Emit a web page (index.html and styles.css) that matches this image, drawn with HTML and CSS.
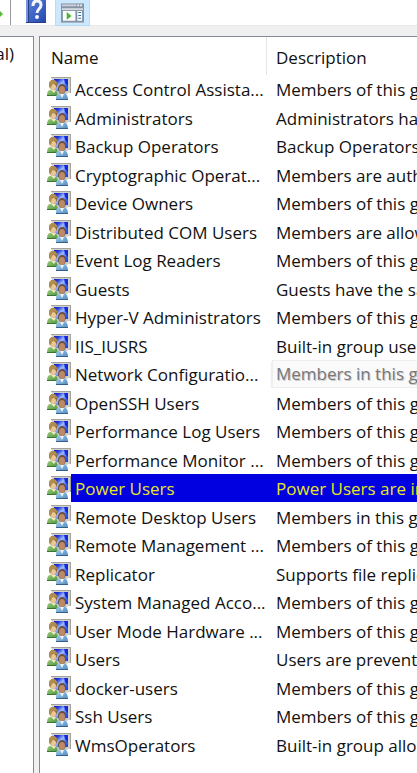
FILE: index.html
```
<!DOCTYPE html>
<html lang="en">
<head>
<meta charset="utf-8">
<meta name="viewport" content="width=device-width, initial-scale=1">
<title>Local Users and Groups</title>
<link rel="stylesheet" href="styles.css">
</head>
<body>
<svg class="defs" aria-hidden="true">
  <defs>
    <linearGradient id="screen" x1="0" y1="0" x2="1" y2="1"><stop offset="0" stop-color="#1420b8"/><stop offset=".2" stop-color="#2038e0"/><stop offset=".45" stop-color="#a0bcff"/><stop offset=".7" stop-color="#3c66f4"/><stop offset="1" stop-color="#1a38e0"/></linearGradient>
    <linearGradient id="green" x1="0" y1="0" x2="1" y2="1"><stop offset="0" stop-color="#9cc878"/><stop offset="1" stop-color="#4a9440"/></linearGradient>
    <linearGradient id="blue" x1="0" y1="0" x2="1" y2="1"><stop offset="0" stop-color="#a8d0f0"/><stop offset="1" stop-color="#5088bc"/></linearGradient>
    <linearGradient id="book" x1="0" y1="0" x2="1" y2="1"><stop offset="0" stop-color="#5c82de"/><stop offset="1" stop-color="#2446ac"/></linearGradient>
    <symbol id="group" viewBox="0 0 24 24">
      <path d="M4 0h20v16h-3l-1 1h-9z" fill="#d0cfca"/>
      <path d="M4 0h20v1H4zM23 1h1v15h-1z" fill="#a3a29c"/>
      <path d="M7 2h14v12H7z" fill="url(#screen)"/>
      <path d="M17 2h4v7l-3-3z" fill="#1428dc"/>
      <path d="M0 19q0-6 3-6h5q3 1 3 6z" fill="url(#green)"/>
      <path d="M0 18h10v1H0z" fill="#397430"/>
      <ellipse cx="6" cy="8" rx="4" ry="5" fill="#8f6c38"/>
      <ellipse cx="6" cy="10" rx="3" ry="3" fill="#ecc796"/>
      <path d="M2 8q0-5 4-5 4 0 4 4-4-1-5 1l-1 3q-2-1-2-3z" fill="#b08e50"/>
      <path d="M4 13h5l-2 3z" fill="#eee9bd"/>
      <path d="M9 23q-1-6 4-7h4q4 1 4 7z" fill="url(#blue)"/>
      <path d="M9 22h12v1H9z" fill="#32618f"/>
      <ellipse cx="15" cy="12" rx="4" ry="5" fill="#6b5042"/>
      <ellipse cx="15" cy="13" rx="3" ry="4" fill="#bc8b65"/>
      <path d="M13 17h4l-2 4z" fill="#edf5fc"/>
    </symbol>
  </defs>
</svg>
<header class="toolbar">
  <button class="tool tool-next" aria-label="Export list"><svg viewBox="0 0 4 12" width="4" height="12"><path d="M0 3l3 3-3 3z" fill="#57bd38"/></svg></button>
  <button class="tool tool-help" aria-label="Help"><svg viewBox="0 0 20 24" width="20" height="24"><path d="M0 0h20v23H0z" fill="url(#book)"/><path d="M0 0h2v23H0z" fill="#7895de"/><path d="M2 0h1v22H2zM0 22h20v1H0z" fill="#263d86"/><path d="M7 6q0-5 4-5t4 4q0 2-2 4-2 2-2 4" fill="none" stroke="#f5f5fa" stroke-width="3"/><circle cx="11" cy="17" r="2" fill="#f5f5fa"/></svg></button>
  <button class="tool tool-pane" aria-label="Show action pane" aria-pressed="true"><svg viewBox="0 0 24 20" width="24" height="20"><path d="M0 0h24v20H0z" fill="#8793a4"/><path d="M1 1h15v2H1z" fill="#c7d0dc"/><path d="M17 1h2v2h-2zM20 1h2v2h-2z" fill="#eef2f8"/><path d="M1 5h22v2H1z" fill="#d5dae2"/><path d="M2 8h13v10H2zM17 8h5v10h-5z" fill="#fafcfd"/><path d="M6 9l5 4-5 4z" fill="#49b52c"/><path d="M18 9h3v1h-3zM18 12h3v1h-3zM18 15h3v1h-3z" fill="#2874ae"/></svg></button>
</header>
<main class="workspace">
  <nav class="tree"><span class="tree-label">al)</span></nav>
  <section class="list">
    <table class="groups">
      <thead><tr><th class="name-head" scope="col">Name</th><th class="desc-head" scope="col">Description</th></tr></thead>
      <tbody>
        <tr><td class="name"><svg class="icon"><use href="#group"/></svg><span>Access Control Assista...</span></td><td class="desc">Members of this g</td></tr>
        <tr><td class="name"><svg class="icon"><use href="#group"/></svg><span>Administrators</span></td><td class="desc">Administrators hav</td></tr>
        <tr><td class="name"><svg class="icon"><use href="#group"/></svg><span>Backup Operators</span></td><td class="desc">Backup Operators</td></tr>
        <tr><td class="name"><svg class="icon"><use href="#group"/></svg><span>Cryptographic Operat...</span></td><td class="desc">Members are auth</td></tr>
        <tr><td class="name"><svg class="icon"><use href="#group"/></svg><span>Device Owners</span></td><td class="desc">Members of this g</td></tr>
        <tr><td class="name"><svg class="icon"><use href="#group"/></svg><span>Distributed COM Users</span></td><td class="desc">Members are allow</td></tr>
        <tr><td class="name"><svg class="icon"><use href="#group"/></svg><span>Event Log Readers</span></td><td class="desc">Members of this g</td></tr>
        <tr><td class="name"><svg class="icon"><use href="#group"/></svg><span>Guests</span></td><td class="desc">Guests have the sa</td></tr>
        <tr><td class="name"><svg class="icon"><use href="#group"/></svg><span>Hyper-V Administrators</span></td><td class="desc">Members of this g</td></tr>
        <tr><td class="name"><svg class="icon"><use href="#group"/></svg><span>IIS_IUSRS</span></td><td class="desc">Built-in group use</td></tr>
        <tr><td class="name"><svg class="icon"><use href="#group"/></svg><span>Network Configuratio...</span></td><td class="desc hinted"><span class="hint">Members in this g</span></td></tr>
        <tr><td class="name"><svg class="icon"><use href="#group"/></svg><span>OpenSSH Users</span></td><td class="desc">Members of this g</td></tr>
        <tr><td class="name"><svg class="icon"><use href="#group"/></svg><span>Performance Log Users</span></td><td class="desc">Members of this g</td></tr>
        <tr><td class="name"><svg class="icon"><use href="#group"/></svg><span>Performance Monitor ...</span></td><td class="desc">Members of this g</td></tr>
        <tr class="selected"><td class="name"><svg class="icon"><use href="#group"/></svg><span>Power Users</span></td><td class="desc">Power Users are in</td></tr>
        <tr><td class="name"><svg class="icon"><use href="#group"/></svg><span>Remote Desktop Users</span></td><td class="desc">Members in this g</td></tr>
        <tr><td class="name"><svg class="icon"><use href="#group"/></svg><span>Remote Management ...</span></td><td class="desc">Members of this g</td></tr>
        <tr><td class="name"><svg class="icon"><use href="#group"/></svg><span>Replicator</span></td><td class="desc">Supports file replic</td></tr>
        <tr><td class="name"><svg class="icon"><use href="#group"/></svg><span>System Managed Acco...</span></td><td class="desc">Members of this g</td></tr>
        <tr><td class="name"><svg class="icon"><use href="#group"/></svg><span>User Mode Hardware ...</span></td><td class="desc">Members of this g</td></tr>
        <tr><td class="name"><svg class="icon"><use href="#group"/></svg><span>Users</span></td><td class="desc">Users are prevente</td></tr>
        <tr><td class="name"><svg class="icon"><use href="#group"/></svg><span>docker-users</span></td><td class="desc">Members of this g</td></tr>
        <tr><td class="name"><svg class="icon"><use href="#group"/></svg><span>Ssh Users</span></td><td class="desc">Members of this g</td></tr>
        <tr><td class="name"><svg class="icon"><use href="#group"/></svg><span>WmsOperators</span></td><td class="desc">Built-in group allo</td></tr>
      </tbody>
    </table>
  </section>
</main>
</body>
</html>
```
FILE: styles.css
```
* { box-sizing: border-box; }
body {
  margin: 0;
  min-height: 100vh;
  display: flex;
  flex-direction: column;
  overflow: hidden;
  background: #f0f0f0;
  color: #111;
  font: 17px/28px "Open Sans", "Noto Sans", sans-serif;
}
.defs { position: absolute; width: 0; height: 0; }
.toolbar {
  display: flex;
  align-items: flex-start;
  height: 26px;
  background: #fff;
  border-bottom: 1px solid #e8e8e8;
}
.tool { display: flex; padding: 0; border: 0; background: none; }
.tool-next { width: 11px; height: 25px; padding-top: 8px; border-right: 1px solid #9a9a9a; }
.tool-help { margin-left: 15px; }
.tool-pane {
  width: 35px;
  height: 26px;
  margin-left: 9px;
  padding: 3px 5px;
  background: #cce8ff;
  border: 1px solid #b5ddfb;
  border-top: 0;
}
.workspace { flex: 1; display: flex; gap: 5px; padding-top: 10px; }
.tree, .list { background: #fff; border-style: solid; border-color: #848b96; border-width: 1px 0 0; }
.tree { width: 34px; border-right-width: 1px; }
.tree-label { display: flex; justify-content: flex-end; width: 14px; padding: 3px 0; }
.list { flex: 1; min-width: 0; border-left-width: 1px; padding-left: 7px; overflow: hidden; }
.groups { width: 100%; table-layout: fixed; border-collapse: separate; border-spacing: 0; }
th, td { padding: 0; text-align: left; font-weight: 400; white-space: nowrap; overflow: hidden; }
th { height: 38px; padding-top: 4px; }
.name-head { width: 220px; padding-left: 4px; border-right: 1px solid #e5e5e5; }
.desc-head, .desc { padding-left: 9px; }
td { height: 28px; line-height: 26px; }
tbody tr:nth-child(even) td { height: 29px; }
.name span, .desc { padding-top: 2px; }
.name span { display: inline-block; width: calc(100% - 24px); padding-left: 4px; vertical-align: top; }
.icon { width: 24px; height: 24px; margin-top: 2px; vertical-align: top; }
.selected .desc, .selected .name span { background: #0000e0; color: #e8e820; }
.desc.hinted { padding: 0 0 0 5px; }
.hint {
  display: block;
  padding-left: 3px;
  border: 1px solid #eee;
  border-right: 0;
  background: #fafafa;
  color: #777;
  text-shadow: 1px 1px 0 #ccc;
  box-shadow: 0 2px 2px #ccc;
}
```
